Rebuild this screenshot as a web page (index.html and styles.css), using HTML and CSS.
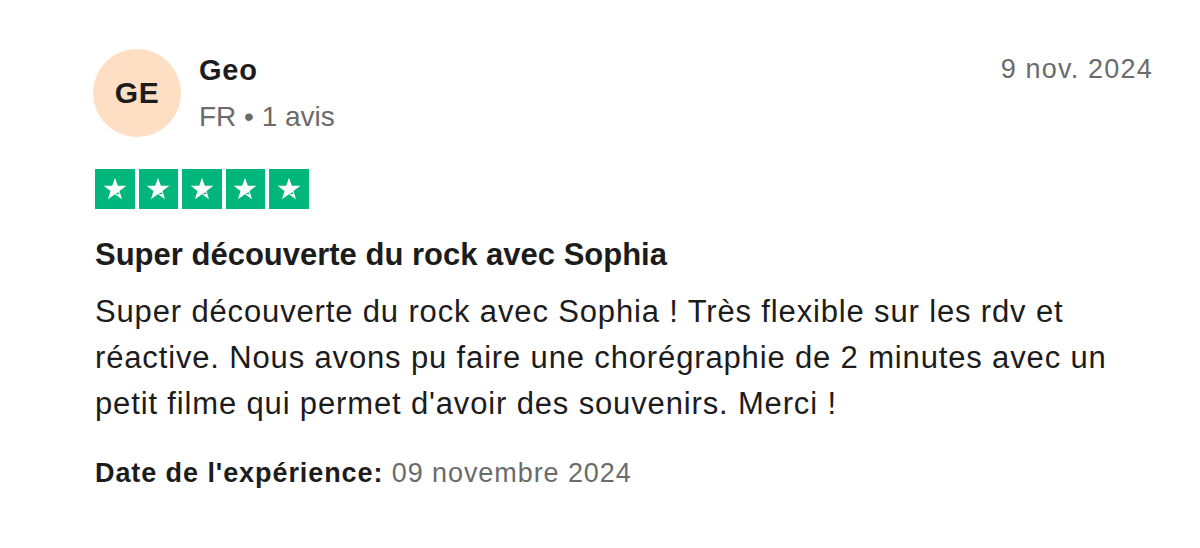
FILE: index.html
```html
<!DOCTYPE html>
<html lang="fr">
<head>
<meta charset="utf-8">
<title>Avis</title>
<link rel="stylesheet" href="styles.css">
</head>
<body>
<article class="review">
  <header class="head">
    <div class="avatar">GE</div>
    <div class="who">
      <div class="name">Geo</div>
      <div class="meta">FR • 1 avis</div>
    </div>
    <time class="date">9 nov. 2024</time>
  </header>
  <div class="stars">
    <span class="star"><svg viewBox="0 0 24 24"><polygon points="12,1.5 14.59,8.94 22.46,9.1 16.18,13.86 18.47,21.4 12,16.9 5.53,21.4 7.82,13.86 1.54,9.1 9.41,8.94" fill="#fff"/><path d="M12 16.9 L15.2 15 L16.4 16.6 Z" fill="#00b67a"/></svg></span>
    <span class="star"><svg viewBox="0 0 24 24"><polygon points="12,1.5 14.59,8.94 22.46,9.1 16.18,13.86 18.47,21.4 12,16.9 5.53,21.4 7.82,13.86 1.54,9.1 9.41,8.94" fill="#fff"/><path d="M12 16.9 L15.2 15 L16.4 16.6 Z" fill="#00b67a"/></svg></span>
    <span class="star"><svg viewBox="0 0 24 24"><polygon points="12,1.5 14.59,8.94 22.46,9.1 16.18,13.86 18.47,21.4 12,16.9 5.53,21.4 7.82,13.86 1.54,9.1 9.41,8.94" fill="#fff"/><path d="M12 16.9 L15.2 15 L16.4 16.6 Z" fill="#00b67a"/></svg></span>
    <span class="star"><svg viewBox="0 0 24 24"><polygon points="12,1.5 14.59,8.94 22.46,9.1 16.18,13.86 18.47,21.4 12,16.9 5.53,21.4 7.82,13.86 1.54,9.1 9.41,8.94" fill="#fff"/><path d="M12 16.9 L15.2 15 L16.4 16.6 Z" fill="#00b67a"/></svg></span>
    <span class="star"><svg viewBox="0 0 24 24"><polygon points="12,1.5 14.59,8.94 22.46,9.1 16.18,13.86 18.47,21.4 12,16.9 5.53,21.4 7.82,13.86 1.54,9.1 9.41,8.94" fill="#fff"/><path d="M12 16.9 L15.2 15 L16.4 16.6 Z" fill="#00b67a"/></svg></span>
  </div>
  <h2 class="title">Super découverte du rock avec Sophia</h2>
  <p class="text">Super découverte du rock avec Sophia ! Très flexible sur les rdv et réactive. Nous avons pu faire une chorégraphie de 2 minutes avec un petit filme qui permet d'avoir des souvenirs. Merci !</p>
  <p class="exp"><b>Date de l'expérience:</b> 09 novembre 2024</p>
</article>
</body>
</html>
```

FILE: styles.css
```css
html, body {
  margin: 0;
  padding: 0;
  background: #fff;
}
body {
  font-family: "Liberation Sans", Arial, Helvetica, sans-serif;
  color: #1c1c1c;
}
.review {
  padding: 49px 48px 0 95px;
}
.head {
  display: flex;
  align-items: flex-start;
  margin-left: -2px;
}
.avatar {
  width: 88px;
  height: 88px;
  border-radius: 50%;
  background: #ffdfc4;
  color: #1c1c1c;
  font-weight: 700;
  font-size: 30px;
  letter-spacing: 0.5px;
  display: flex;
  align-items: center;
  justify-content: center;
  flex: none;
}
.who {
  margin-left: 18px;
  padding-top: 3px;
}
.name {
  font-weight: 700;
  font-size: 29px;
  letter-spacing: 0.8px;
  line-height: 36px;
}
.meta {
  font-size: 28px;
  line-height: 34px;
  margin-top: 12px;
  color: #6b6b6b;
}
.date {
  margin-left: auto;
  margin-right: -1px;
  font-size: 27px;
  letter-spacing: 1.2px;
  line-height: 36px;
  padding-top: 2px;
  color: #6b6b6b;
}
.stars {
  display: flex;
  gap: 4px;
  margin-top: 32px;
}
.star {
  width: 39.5px;
  height: 39.5px;
  background: #00b67a;
  display: flex;
  align-items: center;
  justify-content: center;
}
.star svg {
  width: 26px;
  height: 26px;
}
.title {
  margin: 26px 0 0;
  font-size: 31px;
  line-height: 40px;
  font-weight: 700;
}
.text {
  margin: 14px 0 0;
  font-size: 31px;
  letter-spacing: 0.85px;
  line-height: 46px;
}
.exp {
  margin: 28px 0 0;
  font-size: 27px;
  letter-spacing: 0.92px;
  line-height: 36px;
  color: #6b6b6b;
}
.exp b {
  color: #1c1c1c;
}
```
